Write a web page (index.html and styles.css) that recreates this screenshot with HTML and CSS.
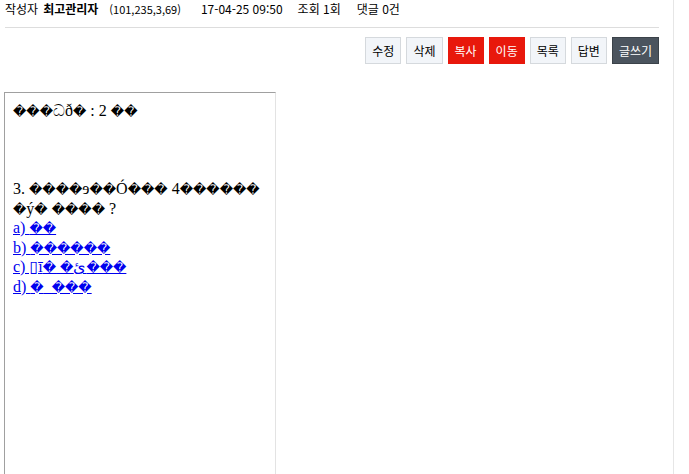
FILE: index.html
```html
<!DOCTYPE html>
<html lang="ko">
<head>
    <meta charset="UTF-8">
    <meta name="viewport" content="width=device-width, initial-scale=1.0">
    <link rel="stylesheet" href="styles.css">
</head>
<body>
    <div class="page">
        <div class="board">
            <div class="info">
                <span class="label">작성자</span>
                <strong class="name">최고관리자</strong>
                <span class="ip">(101,235,3,69)</span>
                <span class="date">17-04-25 09:50</span>
                <span class="hit">조회 1회</span>
                <span class="cmt">댓글 0건</span>
            </div>

            <div class="buttons">
                <a class="btn">수정</a>
                <a class="btn">삭제</a>
                <a class="btn btn-red">복사</a>
                <a class="btn btn-red">이동</a>
                <a class="btn">목록</a>
                <a class="btn">답변</a>
                <a class="btn btn-dark">글쓰기</a>
            </div>

            <!-- broken-charset preview, shown as the browser draws it -->
            <div class="frame">
                <div class="frame-body">
                    <span class="x">���</span>ධð<span class="x">�</span> : 2 <span class="x">��</span><br>
                    <br>
                    <br>
                    <br>
                    3. <span class="x">����</span>ɘ<span class="x">��</span>Ó<span class="x">���</span> 4<span class="x">������</span><br>
                    <span class="x">�</span>ý<span class="x">�</span> <span class="x">����</span> ?<br>
                    <a href="#">a) <span class="x">��</span></a><br>
                    <a href="#">b) <span class="x">������</span></a><br>
                    <a href="#">c) ▯ī<span class="x">�</span> <span class="x">�</span>ئ<span class="x">���</span></a><br>
                    <a href="#">d) <span class="x">�</span>_<span class="x">���</span></a>
                </div>
            </div>
        </div>
        <div class="side"></div>
    </div>
</body>
</html>
```

FILE: styles.css
```css
body {
    margin: 0;
    font-family: "Noto Sans CJK KR", "Noto Sans", sans-serif;
    font-size: 12px;
    color: #000;
    background: #fff;
}

.page {
    display: flex;
    height: 474px;
    overflow: hidden;
}

.board {
    width: 654px;
    margin-left: 5px;
}

.side {
    margin-left: 14px;
    border-left: 1px solid #e6e6e6;
    flex: 1;
}

.info {
    height: 28px;
    border-bottom: 1px solid #dddddd;
    display: flex;
    align-items: center;
    line-height: 16px;
    padding-bottom: 10px;
    box-sizing: border-box;
}

.label {
    margin-right: 5px;
}

.name {
    font-weight: bold;
    margin-right: 11px;
}

.ip {
    font-size: 11px;
    margin-right: 20px;
}

.date {
    margin-right: 15px;
}

.hit {
    margin-right: 16px;
}

.buttons {
    display: flex;
    justify-content: flex-end;
    gap: 5px;
    margin-top: 9px;
}

.btn {
    display: block;
    height: 27px;
    line-height: 25px;
    padding: 0 6px;
    border: 1px solid #d5d9dd;
    background: #f2f5f9;
    color: #000;
    box-sizing: border-box;
    cursor: pointer;
}

.btn-red {
    background: #e8180c;
    border-color: #e8180c;
    color: #fff;
}

.btn-dark {
    background: #4b545e;
    border-color: #3b4249;
    color: #fff;
}

.frame {
    width: 272px;
    height: 400px;
    margin-top: 28px;
    margin-left: -1px;
    border-top: 1px solid #a0a0a0;
    border-left: 1px solid #a0a0a0;
    border-right: 1px solid #e3e3e3;
    box-sizing: border-box;
}

.frame-body {
    padding: 8px;
    font-family: "Liberation Serif", "DejaVu Serif", serif;
    font-size: 16px;
    line-height: 19.5px;
    white-space: nowrap;
}

.frame-body .x {
    font-family: "DejaVu Sans", sans-serif;
    font-size: 13px;
    line-height: 1;
}

.frame-body a {
    color: #0000ee;
}
```
